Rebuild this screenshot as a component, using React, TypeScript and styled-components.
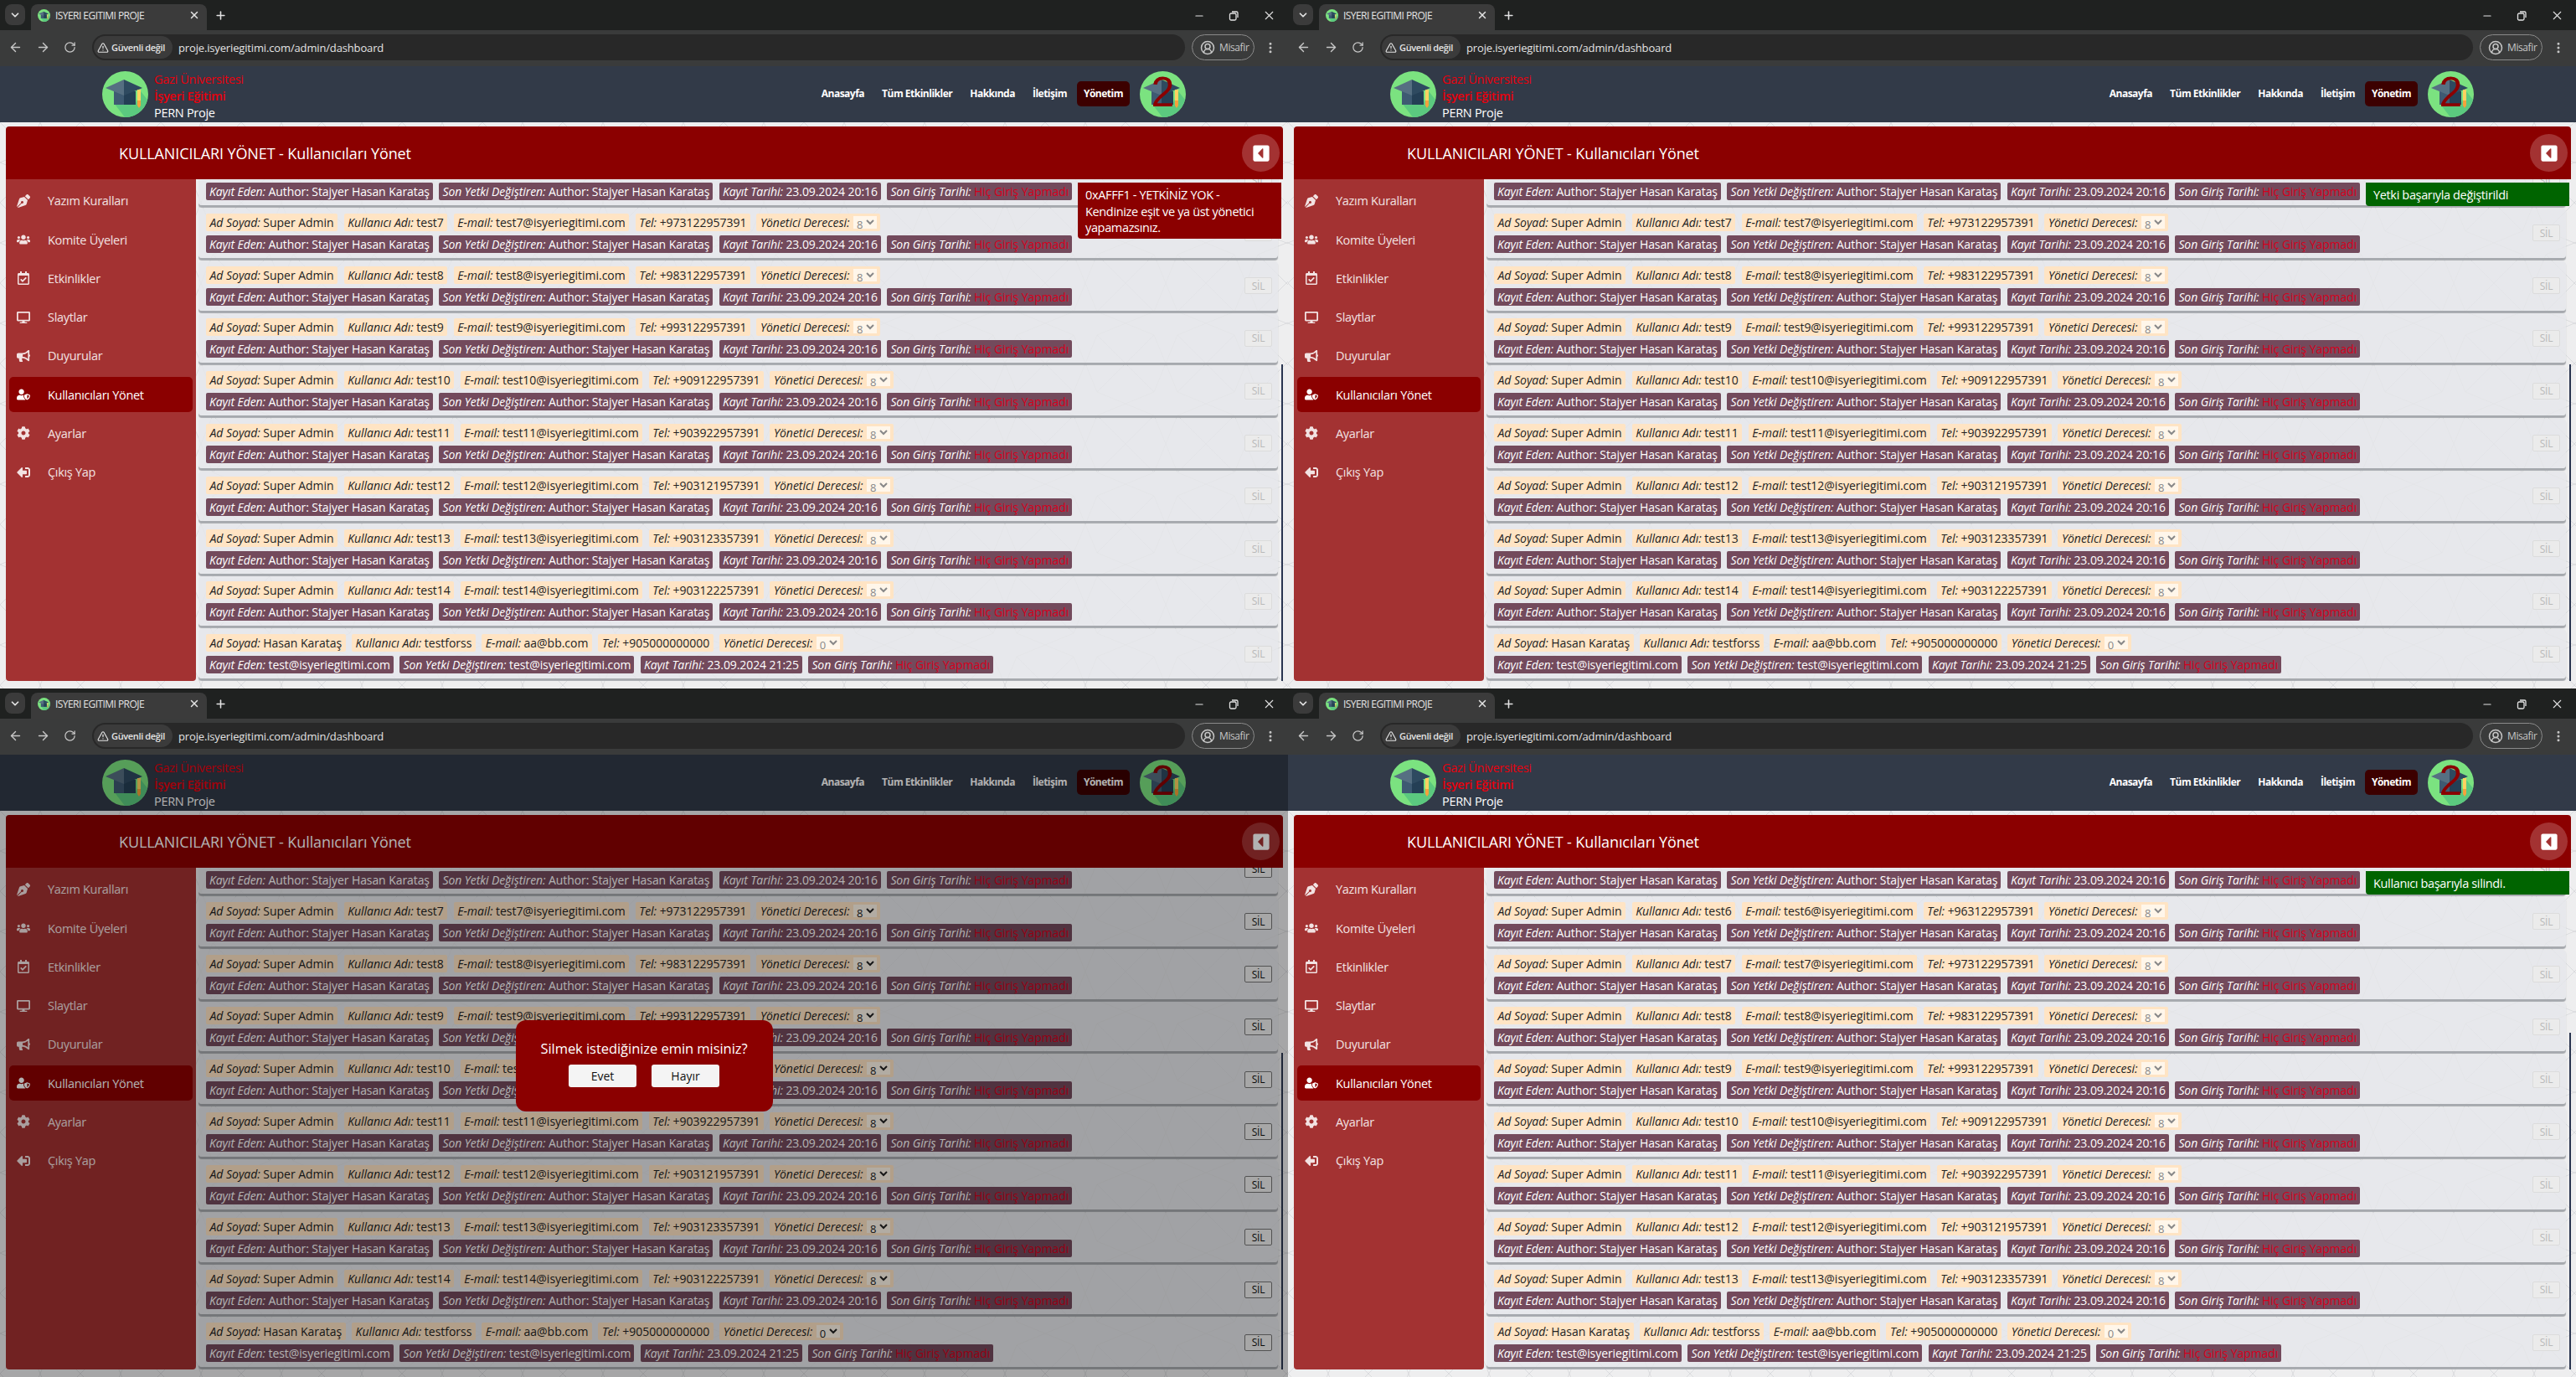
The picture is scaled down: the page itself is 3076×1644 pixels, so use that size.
import React from "react";
import styled, { createGlobalStyle } from "styled-components";
import {
  ArrowLeft,
  ArrowRight,
  ChevronDown,
  CircleUserRound,
  EllipsisVertical,
  Minus,
  Plus,
  RotateCw,
  TriangleAlert,
  X,
} from "lucide-react";
import {
  FaBullhorn,
  FaCaretSquareLeft,
  FaCog,
  FaDesktop,
  FaPenNib,
  FaRegCalendarCheck,
  FaSignOutAlt,
  FaUserShield,
  FaUsers,
} from "react-icons/fa";

const FONT = `"Open Sans", "Noto Sans", sans-serif`;

const pattern = `url("data:image/svg+xml,%3Csvg xmlns='http://www.w3.org/2000/svg' width='96' height='96'%3E%3Cpath d='M48 0L62 34L96 48L62 62L48 96L34 62L0 48L34 34ZM0 0L34 34M96 0L62 34M0 96L34 62M96 96L62 62' fill='none' stroke='%23cfd0d4' stroke-width='1' opacity='.6'/%3E%3C/svg%3E")`;

const GlobalStyle = createGlobalStyle`
  html, body {
    margin: 0;
    padding: 0;
    background: #1f2120;
  }
  * {
    box-sizing: border-box;
  }
`;

type User = {
  name: string;
  username: string;
  email: string;
  phone: string;
  level: string;
  creator: string;
  created: string;
};

const author = "Author: Stajyer Hasan Karataş";

const superAdmin = (n: number, phone: string): User => ({
  name: "Super Admin",
  username: `test${n}`,
  email: `test${n}@isyeriegitimi.com`,
  phone,
  level: "8",
  creator: author,
  created: "23.09.2024 20:16",
});

const hasan: User = {
  name: "Hasan Karataş",
  username: "testforss",
  email: "aa@bb.com",
  phone: "+905000000000",
  level: "0",
  creator: "test@isyeriegitimi.com",
  created: "23.09.2024 21:25",
};

const phones: Record<number, string> = {
  5: "+953122957391",
  6: "+963122957391",
  7: "+973122957391",
  8: "+983122957391",
  9: "+993122957391",
  10: "+909122957391",
  11: "+903922957391",
  12: "+903121957391",
  13: "+903123357391",
  14: "+903122257391",
};

const listFrom = (first: number, last: number) => {
  const out: User[] = [];
  for (let n = first; n <= last; n++) out.push(superAdmin(n, phones[n]));
  out.push(hasan);
  return out;
};

const Screens = styled.div`
  display: grid;
  grid-template-columns: 1538px 1538px;
  grid-template-rows: 822px 822px;
  width: 3076px;
  height: 1644px;
  overflow: hidden;
`;

const Win = styled.div`
  display: flex;
  flex-direction: column;
  width: 1538px;
  height: 822px;
  overflow: hidden;
  font-family: ${FONT};
`;

const TabStrip = styled.div`
  flex: none;
  height: 36px;
  background: #1f2120;
  display: flex;
  align-items: flex-end;
  color: #e3e3e3;
  padding-left: 6px;
`;

const TabMenu = styled.div`
  width: 24px;
  height: 25px;
  margin-bottom: 6px;
  border-radius: 8px;
  background: #3b3b3b;
  display: flex;
  align-items: center;
  justify-content: center;
`;

const Tab = styled.div`
  width: 210px;
  height: 31px;
  margin-left: 7px;
  padding: 0 8px 5px 8px;
  background: #3b3b3b;
  border-radius: 8px 8px 0 0;
  display: flex;
  align-items: center;
  font-size: 12px;
  letter-spacing: -0.55px;
`;

const TabTitle = styled.span`
  margin-left: 6px;
  flex: 1;
`;

const NewTab = styled.div`
  margin: 0 0 10px 9px;
  display: flex;
`;

const WindowControls = styled.div`
  margin-left: auto;
  margin-bottom: 9px;
  padding-right: 14px;
  display: flex;
  align-items: center;
  gap: 28px;
`;

const Toolbar = styled.div`
  flex: none;
  height: 43px;
  background: #3a3b3b;
  display: flex;
  align-items: flex-start;
  padding: 5px 0 0 10px;
  color: #c7c7c7;
`;

const NavButtons = styled.div`
  display: flex;
  align-items: center;
  gap: 16px;
  height: 31px;
  width: 100px;
`;

const Omnibox = styled.div`
  width: 1305px;
  height: 31px;
  border-radius: 16px;
  background: #282828;
  display: flex;
  align-items: center;
  padding-left: 2px;
  font-size: 13px;
  color: #e3e3e3;
  letter-spacing: -0.15px;
`;

const SecurityChip = styled.div`
  height: 27px;
  width: 94px;
  border-radius: 14px;
  background: #3b3b3b;
  display: flex;
  align-items: center;
  gap: 3px;
  padding-left: 4px;
  font-size: 11px;
  font-weight: 600;
  letter-spacing: -0.35px;
  white-space: nowrap;
`;

const Url = styled.span`
  margin-left: 7px;
`;

const Profile = styled.div`
  margin-left: 8px;
  width: 75px;
  height: 31px;
  border: 1px solid #8a8a8a;
  border-radius: 16px;
  display: flex;
  align-items: center;
  gap: 5px;
  padding-left: 9px;
  font-size: 12px;
  letter-spacing: -0.4px;
`;

const MenuDots = styled.div`
  margin-left: 11px;
  height: 31px;
  display: flex;
  align-items: center;
`;

const Site = styled.div`
  position: relative;
  flex: 1;
  min-height: 0;
  display: flex;
  flex-direction: column;
`;

const NavBar = styled.header`
  flex: none;
  height: 67px;
  background: #323a48;
  padding: 6px 122px 0;
  display: flex;
  align-items: flex-start;
  justify-content: space-between;
`;

const Brand = styled.div`
  display: flex;
  gap: 7px;
`;

const BrandText = styled.div`
  font-size: 14.5px;
  line-height: 20px;
  letter-spacing: -0.3px;
`;

const BrandLine = styled.div<{ $red?: boolean; $bold?: boolean }>`
  color: ${(p) => (p.$red ? "#e8000d" : "#ffffff")};
  font-weight: ${(p) => (p.$bold ? 600 : 400)};
`;

const NavLinks = styled.nav`
  display: flex;
  align-items: flex-start;
  gap: 21px;
`;

const NavLink = styled.a<{ $active?: boolean }>`
  height: 30px;
  margin-top: 12px;
  padding: 0 ${(p) => (p.$active ? "8px" : "0")};
  margin-left: ${(p) => (p.$active ? "-9px" : "0")};
  margin-right: ${(p) => (p.$active ? "-9px" : "0")};
  border-radius: 5px;
  background: ${(p) => (p.$active ? "#3c0000" : "transparent")};
  color: #fff;
  font-size: 12px;
  font-weight: 700;
  line-height: 30px;
  letter-spacing: -0.5px;
  white-space: nowrap;
`;

const Avatar = styled.div`
  position: relative;
  width: 55px;
  height: 55px;
`;

const AvatarBadge = styled.span`
  position: absolute;
  left: 0;
  right: 0;
  top: -9px;
  text-align: center;
  color: #8b0000;
  font-size: 50px;
  line-height: 68px;
  font-family: "Liberation Sans", sans-serif;
`;

const PageArea = styled.main`
  flex: 1;
  min-height: 0;
  background: #eeeeef ${pattern};
  padding: 5px 6px 9px 7px;
`;

const Panel = styled.section`
  position: relative;
  height: 100%;
  display: flex;
  flex-direction: column;
  border-radius: 4px 4px 0 0;
`;

const PanelHeader = styled.div`
  flex: none;
  height: 63px;
  background: #8b0000;
  border-radius: 4px 4px 0 0;
  display: flex;
  align-items: center;
  justify-content: space-between;
  padding: 0 4px 0 135px;
`;

const PanelTitle = styled.h1`
  margin: 0;
  color: #fff;
  font-size: 18px;
  font-weight: 500;
  letter-spacing: -0.1px;
`;

const CollapseButton = styled.button`
  width: 45px;
  height: 45px;
  border: 0;
  border-radius: 50%;
  background: #a33232;
  color: #fff;
  display: flex;
  align-items: center;
  justify-content: center;
  padding: 0;
  font-size: 22px;
`;

const PanelBody = styled.div`
  flex: 1;
  min-height: 0;
  display: flex;
`;

const Sidebar = styled.aside`
  flex: none;
  width: 227px;
  background: #a33232;
  border-radius: 0 0 4px 4px;
  padding: 5px 4px 0;
  display: flex;
  flex-direction: column;
  gap: 4.7px;
`;

const SideItem = styled.a<{ $active?: boolean }>`
  height: 41.6px;
  border-radius: 5px;
  background: ${(p) => (p.$active ? "#8b0000" : "transparent")};
  color: ${(p) => (p.$active ? "#ffffff" : "#f2e2e2")};
  display: flex;
  align-items: center;
  padding-left: 9px;
  font-size: 14.5px;
  letter-spacing: -0.3px;
`;

const SideIcon = styled.span<{ $flip?: boolean }>`
  width: 37px;
  display: flex;
  font-size: 16px;
  transform: ${(p) => (p.$flip ? "scaleX(-1)" : "none")};
  transform-origin: 8px center;
`;

const ListArea = styled.div`
  position: relative;
  flex: 1;
  min-width: 0;
  margin-left: 3px;
  overflow: hidden;
`;

const ScrollThumb = styled.div<{ $top: number }>`
  position: absolute;
  right: -1px;
  top: ${(p) => p.$top}px;
  bottom: 0;
  width: 3px;
  background: #2a3550;
`;

const UserList = styled.div`
  margin-top: -28px;
  padding-right: 6px;
  display: flex;
  flex-direction: column;
  gap: 3.8px;
`;

const Card = styled.article`
  flex: none;
  height: 59px;
  padding: 6px 7px 6px 9px;
  background: rgba(230, 231, 234, 0.78);
  border-radius: 4px;
  box-shadow: 0 2.5px 1px #a6a9ae;
  display: flex;
  align-items: center;
  justify-content: space-between;
`;

const CardRows = styled.div`
  display: flex;
  flex-direction: column;
  gap: 5px;
`;

const PillRow = styled.div`
  display: flex;
  gap: 7.5px;
`;

const Pill = styled.span<{ $dark?: boolean }>`
  height: 21px;
  padding: 0 ${(p) => (p.$dark ? "4px" : "4.5px")};
  display: inline-flex;
  align-items: center;
  gap: 3.5px;
  border-radius: 2px;
  background: ${(p) => (p.$dark ? "#734a5c" : "#ffe4c4")};
  color: ${(p) => (p.$dark ? "#ffffff" : "#222222")};
  font-size: 14px;
  letter-spacing: ${(p) => (p.$dark ? "-0.08px" : "-0.02px")};
  white-space: nowrap;
`;

const Label = styled.em`
  font-style: italic;
`;

const NeverLogged = styled.span`
  color: #d6001c;
`;

const LevelSelect = styled.select`
  height: 15px;
  width: 28px;
  margin-left: 1px;
  padding: 0;
  border: 0;
  border-radius: 0;
  background: rgba(255, 255, 255, 0.65);
  font-family: ${FONT};
  font-size: 13px;
  color: #222;
  &:disabled {
    color: #888;
    opacity: 1;
  }
`;

const DeleteButton = styled.button`
  width: 33px;
  height: 20px;
  padding: 0;
  border: 1px solid #767676;
  border-radius: 2px;
  background: #efefef;
  font-family: ${FONT};
  font-size: 12px;
  letter-spacing: -0.3px;
  color: #111;
  &:disabled {
    border-color: #dcdcdc;
    background: #ebebeb;
    color: #b9b9b9;
  }
`;

const Toast = styled.div<{ $ok?: boolean }>`
  position: absolute;
  top: 67px;
  right: 2px;
  width: 243px;
  padding: 5px 9px 3px;
  background: ${(p) => (p.$ok ? "#006400" : "#8b0000")};
  color: #fff;
  border-radius: 0 0 0 4px;
  font-size: 14.5px;
  line-height: 19.6px;
  letter-spacing: -0.35px;
`;

const Dim = styled.div`
  position: absolute;
  inset: 0;
  background: rgba(0, 0, 0, 0.3);
  display: flex;
  align-items: center;
  justify-content: center;
`;

const ConfirmBox = styled.div`
  width: 307px;
  height: 109px;
  background: #8b0000;
  border-radius: 12px;
  color: #fff;
  padding-top: 22px;
  text-align: center;
  font-size: 16.5px;
  line-height: 24px;
  letter-spacing: -0.05px;
`;

const ConfirmActions = styled.div`
  margin-top: 7px;
  display: flex;
  justify-content: center;
  gap: 18px;
`;

const ConfirmButton = styled.button`
  width: 81px;
  height: 27px;
  padding: 0;
  border: 0;
  border-radius: 3px;
  background: #f4f4f4;
  color: #111;
  font-family: ${FONT};
  font-size: 14px;
`;

const GradLogo = ({ size }: { size: number }) => (
  <svg width={size} height={size} viewBox="0 0 55 55" style={{ display: "block", flex: "none" }}>
    <circle cx="27.5" cy="27.5" r="27.5" fill="#7be280" />
    <path d="M14 38L40 38L46 24L54 34A27.5 27.5 0 0 1 27 55Z" fill="#5bc97f" />
    <path d="M14 24H26V40H14Z" fill="#3e5a72" />
    <path d="M26 24H40V40H26Z" fill="#243f55" />
    <path d="M4 20L26 10V29Z" fill="#566f82" />
    <path d="M48 20L26 10V29Z" fill="#2e4a60" />
    <path d="M42 22H46V35H42Z" fill="#ffd160" />
    <path d="M42 35H46V41L44 44L42 41Z" fill="#f5a23c" />
  </svg>
);

const sideItems = [
  { label: "Yazım Kuralları", icon: <FaPenNib /> },
  { label: "Komite Üyeleri", icon: <FaUsers /> },
  { label: "Etkinlikler", icon: <FaRegCalendarCheck /> },
  { label: "Slaytlar", icon: <FaDesktop /> },
  { label: "Duyurular", icon: <FaBullhorn /> },
  { label: "Kullanıcıları Yönet", icon: <FaUserShield />, active: true },
  { label: "Ayarlar", icon: <FaCog /> },
  { label: "Çıkış Yap", icon: <FaSignOutAlt />, flip: true },
];

const UserCard = ({ user, enabled }: { user: User; enabled: boolean }) => (
  <Card>
    <CardRows>
      <PillRow>
        <Pill><Label>Ad Soyad:</Label> {user.name}</Pill>
        <Pill><Label>Kullanıcı Adı:</Label> {user.username}</Pill>
        <Pill><Label>E-mail:</Label> {user.email}</Pill>
        <Pill><Label>Tel:</Label> {user.phone}</Pill>
        <Pill>
          <Label>Yönetici Derecesi:</Label>
          <LevelSelect disabled={!enabled} defaultValue={user.level}>
            <option>{user.level}</option>
          </LevelSelect>
        </Pill>
      </PillRow>
      <PillRow>
        <Pill $dark><Label>Kayıt Eden:</Label> {user.creator}</Pill>
        <Pill $dark><Label>Son Yetki Değiştiren:</Label> {user.creator}</Pill>
        <Pill $dark><Label>Kayıt Tarihi:</Label> {user.created}</Pill>
        <Pill $dark><Label>Son Giriş Tarihi:</Label> <NeverLogged>Hiç Giriş Yapmadı</NeverLogged></Pill>
      </PillRow>
    </CardRows>
    <DeleteButton disabled={!enabled}>SİL</DeleteButton>
  </Card>
);

type WindowProps = {
  users: User[];
  thumbTop: number;
  toast?: React.ReactNode;
  toastOk?: boolean;
  confirm?: boolean;
};

const BrowserWindow = ({ users, thumbTop, toast, toastOk, confirm }: WindowProps) => (
  <Win>
    <TabStrip>
      <TabMenu><ChevronDown size={14} strokeWidth={3} /></TabMenu>
      <Tab>
        <GradLogo size={15} />
        <TabTitle>ISYERI EGITIMI PROJE</TabTitle>
        <X size={14} strokeWidth={2.5} />
      </Tab>
      <NewTab><Plus size={15} strokeWidth={2.5} /></NewTab>
      <WindowControls>
        <Minus size={14} />
        <svg width="12" height="12" viewBox="0 0 12 12" fill="none" stroke="currentColor" strokeWidth="1.3">
          <rect x="1.5" y="3" width="7.5" height="8" rx="1.5" />
          <path d="M4 1H9.5A1.5 1.5 0 0 1 11 2.5V8" />
        </svg>
        <X size={17} strokeWidth={1.5} />
      </WindowControls>
    </TabStrip>
    <Toolbar>
      <NavButtons>
        <ArrowLeft size={17} />
        <ArrowRight size={17} />
        <RotateCw size={15} />
      </NavButtons>
      <Omnibox>
        <SecurityChip>
          <TriangleAlert size={14} />
          Güvenli değil
        </SecurityChip>
        <Url>proje.isyeriegitimi.com/admin/dashboard</Url>
      </Omnibox>
      <Profile>
        <CircleUserRound size={18} />
        Misafir
      </Profile>
      <MenuDots><EllipsisVertical size={16} strokeWidth={2.5} /></MenuDots>
    </Toolbar>
    <Site>
      <NavBar>
        <Brand>
          <GradLogo size={55} />
          <BrandText>
            <BrandLine $red>Gazi Üniversitesi</BrandLine>
            <BrandLine $red $bold>İşyeri Eğitimi</BrandLine>
            <BrandLine>PERN Proje</BrandLine>
          </BrandText>
        </Brand>
        <NavLinks>
          <NavLink>Anasayfa</NavLink>
          <NavLink>Tüm Etkinlikler</NavLink>
          <NavLink>Hakkında</NavLink>
          <NavLink>İletişim</NavLink>
          <NavLink $active>Yönetim</NavLink>
          <Avatar>
            <GradLogo size={55} />
            <AvatarBadge>2</AvatarBadge>
          </Avatar>
        </NavLinks>
      </NavBar>
      <PageArea>
        <Panel>
          <PanelHeader>
            <PanelTitle>KULLANICILARI YÖNET - Kullanıcıları Yönet</PanelTitle>
            <CollapseButton><FaCaretSquareLeft /></CollapseButton>
          </PanelHeader>
          <PanelBody>
            <Sidebar>
              {sideItems.map((item) => (
                <SideItem key={item.label} $active={item.active}>
                  <SideIcon $flip={item.flip}>{item.icon}</SideIcon>
                  {item.label}
                </SideItem>
              ))}
            </Sidebar>
            <ListArea>
              <UserList>
                {users.map((u) => (
                  <UserCard key={u.username} user={u} enabled={!!confirm} />
                ))}
              </UserList>
              <ScrollThumb $top={thumbTop} />
            </ListArea>
          </PanelBody>
          {toast && <Toast $ok={toastOk}>{toast}</Toast>}
        </Panel>
      </PageArea>
      {confirm && (
        <Dim>
          <ConfirmBox>
            Silmek istediğinize emin misiniz?
            <ConfirmActions>
              <ConfirmButton>Evet</ConfirmButton>
              <ConfirmButton>Hayır</ConfirmButton>
            </ConfirmActions>
          </ConfirmBox>
        </Dim>
      )}
    </Site>
  </Win>
);

export default function App() {
  return (
    <>
      <GlobalStyle />
      <Screens>
        <BrowserWindow
          users={listFrom(6, 14)}
          thumbTop={221}
          toast="0xAFFF1 - YETKİNİZ YOK - Kendinize eşit ve ya üst yönetici yapamazsınız."
        />
        <BrowserWindow users={listFrom(6, 14)} thumbTop={221} toast="Yetki başarıyla değiştirildi" toastOk />
        <BrowserWindow users={listFrom(6, 14)} thumbTop={221} confirm />
        <BrowserWindow users={listFrom(5, 13)} thumbTop={197} toast="Kullanıcı başarıyla silindi." toastOk />
      </Screens>
    </>
  );
}
